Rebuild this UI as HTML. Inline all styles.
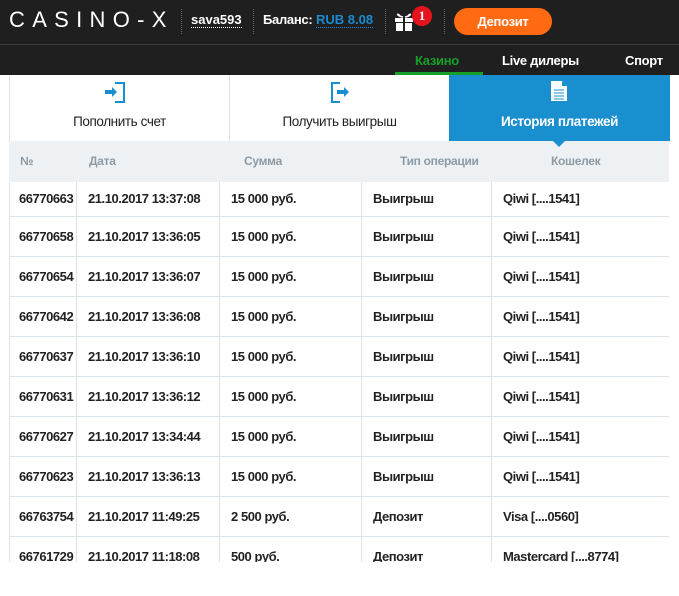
<!DOCTYPE html>
<html><head><meta charset="utf-8">
<style>
*{margin:0;padding:0;box-sizing:border-box}
body{width:679px;height:596px;overflow:hidden;background:#fff;font-family:"Liberation Sans",Arial,sans-serif;position:relative}
.top{position:absolute;left:0;top:0;width:679px;height:75px;background:#1f1f1f}
.line{position:absolute;left:0;top:44px;width:679px;height:1px;background:#3b3b3b}
.logo{position:absolute;left:9px;top:9px;color:#fff;font-size:22px;line-height:22px;letter-spacing:7.3px;font-weight:normal;white-space:nowrap}
.sep{position:absolute;top:9px;height:25px;border-left:1px dotted #666}
.user{position:absolute;left:191px;top:12px;color:#fff;font-size:13px;font-weight:bold;border-bottom:1px dotted #fff;line-height:15px}
.bal{position:absolute;left:263px;top:12px;color:#fff;font-size:13px;font-weight:bold;line-height:15px;letter-spacing:-0.3px}
.rub{position:absolute;left:316px;top:12px;color:#1a8ad0;font-size:13px;font-weight:bold;border-bottom:1px dotted #1a8ad0;line-height:15px}
.badge{position:absolute;left:412px;top:6px;width:20px;height:20px;border-radius:50%;background:#e5141c;color:#fff;font-weight:bold;font-size:13px;text-align:center;line-height:20px;font-family:"Liberation Serif",serif}
.dep{position:absolute;left:454px;top:8px;width:98px;height:27px;border-radius:14px;background:#ff6a13;color:#fff;font-weight:bold;font-size:13px;text-align:center;line-height:27px;letter-spacing:-0.3px}
.nav{position:absolute;top:53px;font-size:13px;font-weight:bold;color:#fff;letter-spacing:-0.3px}
.green{position:absolute;left:395px;top:72px;width:88px;height:3px;background:#16a02a}
.tabs{position:absolute;left:9px;top:75px;width:660px;height:66px;border-left:1px solid #dce4ea}
.tab{position:absolute;top:0;height:66px;text-align:center;font-size:13.5px;color:#222;letter-spacing:-0.4px}
.tab span{position:absolute;left:0;right:0;top:39px}
.tab svg{position:absolute;top:6px}
.thead{position:absolute;left:9px;top:141px;width:660px;height:41px;background:#edf1f4}
.th{position:absolute;top:13px;font-size:12px;color:#8e9aa3;font-weight:bold;letter-spacing:-0.3px}
.rows{position:absolute;left:9px;top:182px;width:660px;height:380px;overflow:hidden;border-left:1px solid #dce4ea}
.row{position:absolute;left:0;width:660px;height:40px;border-bottom:1px solid #dce4ea}
.c{position:absolute;top:0;height:100%;border-left:1px solid #dce4ea;font-size:13px;font-weight:bold;color:#222;letter-spacing:-0.45px;line-height:40px}
.row:first-child .c{line-height:33px}
</style></head><body>
<div class="top"></div><div class="line"></div>
<div class="logo">CASINO-X</div>
<div class="sep" style="left:181px"></div>
<div class="user">sava593</div>
<div class="sep" style="left:253px"></div>
<div class="bal">Баланс:</div>
<div class="rub">RUB 8.08</div>
<div class="sep" style="left:385px"></div>
<svg style="position:absolute;left:394px;top:11px" width="20" height="20" viewBox="0 0 20 20"><path d="M6 5 C3 1 2 5 9 6 M14 5 C17 1 18 5 11 6" stroke="#fff" stroke-width="1.6" fill="none"/><rect x="1" y="7" width="18" height="4" fill="#fff"/><rect x="2" y="12" width="16" height="8" fill="#fff"/><rect x="9" y="7" width="2" height="13" fill="#1f1f1f"/></svg>
<div class="badge">1</div>
<div class="sep" style="left:444px"></div>
<div class="dep">Депозит</div>
<div class="nav" style="left:415px;color:#16a02a">Казино</div>
<div class="nav" style="left:502px">Live дилеры</div>
<div class="nav" style="left:625px">Спорт</div>
<div class="green"></div>
<div class="tabs">
<div class="tab" style="left:0;width:219px"><svg style="left:94px" width="22" height="22" viewBox="0 0 22 22"><path d="M11 2H20V21H11" stroke="#1a8fd0" stroke-width="2" fill="none"/><path d="M1 9H8V6L13 11L8 16V13H1Z" fill="#1a8fd0"/></svg><span>Пополнить счет</span></div>
<div class="tab" style="left:219px;width:220px;border-left:1px solid #dce4ea"><svg style="left:100px" width="22" height="22" viewBox="0 0 22 22"><path d="M10 2H2V21H10" stroke="#1a8fd0" stroke-width="2" fill="none"/><path d="M7 9H14V6L19 11L14 16V13H7Z" fill="#1a8fd0"/></svg><span>Получить выигрыш</span></div>
<div class="tab" style="left:439px;width:221px;background:#1a8fd0;color:#fff;font-weight:bold"><svg style="left:101px;top:5px" width="18" height="22" viewBox="0 0 18 22"><path d="M1 1H12L17 6V21H1Z" fill="#fff"/><path d="M12 1V6H17" fill="#1a8fd0"/><path d="M4 10H14M4 13H14M4 16H14M4 19H14" stroke="#1a8fd0" stroke-width="1"/></svg><span>История платежей</span></div>
</div>
<div class="thead">
<div class="th" style="left:11px">№</div>
<div class="th" style="left:80px">Дата</div>
<div class="th" style="left:235px">Сумма</div>
<div class="th" style="left:391px">Тип операции</div>
<div class="th" style="left:542px">Кошелек</div>
<div style="position:absolute;left:544px;top:0;width:0;height:0;border-left:6px solid transparent;border-right:6px solid transparent;border-top:6px solid #1a8fd0"></div>
</div>
<div class="rows">
<div class="row" style="top:0;height:35px"><div class="c" style="left:-1px;padding-left:10px;border:none">66770663</div><div class="c" style="left:66px;padding-left:11px">21.10.2017 13:37:08</div><div class="c" style="left:209px;padding-left:11px">15 000 руб.</div><div class="c" style="left:351px;padding-left:11px">Выигрыш</div><div class="c" style="left:481px;padding-left:11px">Qiwi [....1541]</div></div>
<div class="row" style="top:35px"><div class="c" style="left:-1px;padding-left:10px;border:none">66770658</div><div class="c" style="left:66px;padding-left:11px">21.10.2017 13:36:05</div><div class="c" style="left:209px;padding-left:11px">15 000 руб.</div><div class="c" style="left:351px;padding-left:11px">Выигрыш</div><div class="c" style="left:481px;padding-left:11px">Qiwi [....1541]</div></div>
<div class="row" style="top:75px"><div class="c" style="left:-1px;padding-left:10px;border:none">66770654</div><div class="c" style="left:66px;padding-left:11px">21.10.2017 13:36:07</div><div class="c" style="left:209px;padding-left:11px">15 000 руб.</div><div class="c" style="left:351px;padding-left:11px">Выигрыш</div><div class="c" style="left:481px;padding-left:11px">Qiwi [....1541]</div></div>
<div class="row" style="top:115px"><div class="c" style="left:-1px;padding-left:10px;border:none">66770642</div><div class="c" style="left:66px;padding-left:11px">21.10.2017 13:36:08</div><div class="c" style="left:209px;padding-left:11px">15 000 руб.</div><div class="c" style="left:351px;padding-left:11px">Выигрыш</div><div class="c" style="left:481px;padding-left:11px">Qiwi [....1541]</div></div>
<div class="row" style="top:155px"><div class="c" style="left:-1px;padding-left:10px;border:none">66770637</div><div class="c" style="left:66px;padding-left:11px">21.10.2017 13:36:10</div><div class="c" style="left:209px;padding-left:11px">15 000 руб.</div><div class="c" style="left:351px;padding-left:11px">Выигрыш</div><div class="c" style="left:481px;padding-left:11px">Qiwi [....1541]</div></div>
<div class="row" style="top:195px"><div class="c" style="left:-1px;padding-left:10px;border:none">66770631</div><div class="c" style="left:66px;padding-left:11px">21.10.2017 13:36:12</div><div class="c" style="left:209px;padding-left:11px">15 000 руб.</div><div class="c" style="left:351px;padding-left:11px">Выигрыш</div><div class="c" style="left:481px;padding-left:11px">Qiwi [....1541]</div></div>
<div class="row" style="top:235px"><div class="c" style="left:-1px;padding-left:10px;border:none">66770627</div><div class="c" style="left:66px;padding-left:11px">21.10.2017 13:34:44</div><div class="c" style="left:209px;padding-left:11px">15 000 руб.</div><div class="c" style="left:351px;padding-left:11px">Выигрыш</div><div class="c" style="left:481px;padding-left:11px">Qiwi [....1541]</div></div>
<div class="row" style="top:275px"><div class="c" style="left:-1px;padding-left:10px;border:none">66770623</div><div class="c" style="left:66px;padding-left:11px">21.10.2017 13:36:13</div><div class="c" style="left:209px;padding-left:11px">15 000 руб.</div><div class="c" style="left:351px;padding-left:11px">Выигрыш</div><div class="c" style="left:481px;padding-left:11px">Qiwi [....1541]</div></div>
<div class="row" style="top:315px"><div class="c" style="left:-1px;padding-left:10px;border:none">66763754</div><div class="c" style="left:66px;padding-left:11px">21.10.2017 11:49:25</div><div class="c" style="left:209px;padding-left:11px">2 500 руб.</div><div class="c" style="left:351px;padding-left:11px">Депозит</div><div class="c" style="left:481px;padding-left:11px">Visa [....0560]</div></div>
<div class="row" style="top:355px"><div class="c" style="left:-1px;padding-left:10px;border:none">66761729</div><div class="c" style="left:66px;padding-left:11px">21.10.2017 11:18:08</div><div class="c" style="left:209px;padding-left:11px">500 руб.</div><div class="c" style="left:351px;padding-left:11px">Депозит</div><div class="c" style="left:481px;padding-left:11px">Mastercard [....8774]</div></div>
</div>
</body></html>
